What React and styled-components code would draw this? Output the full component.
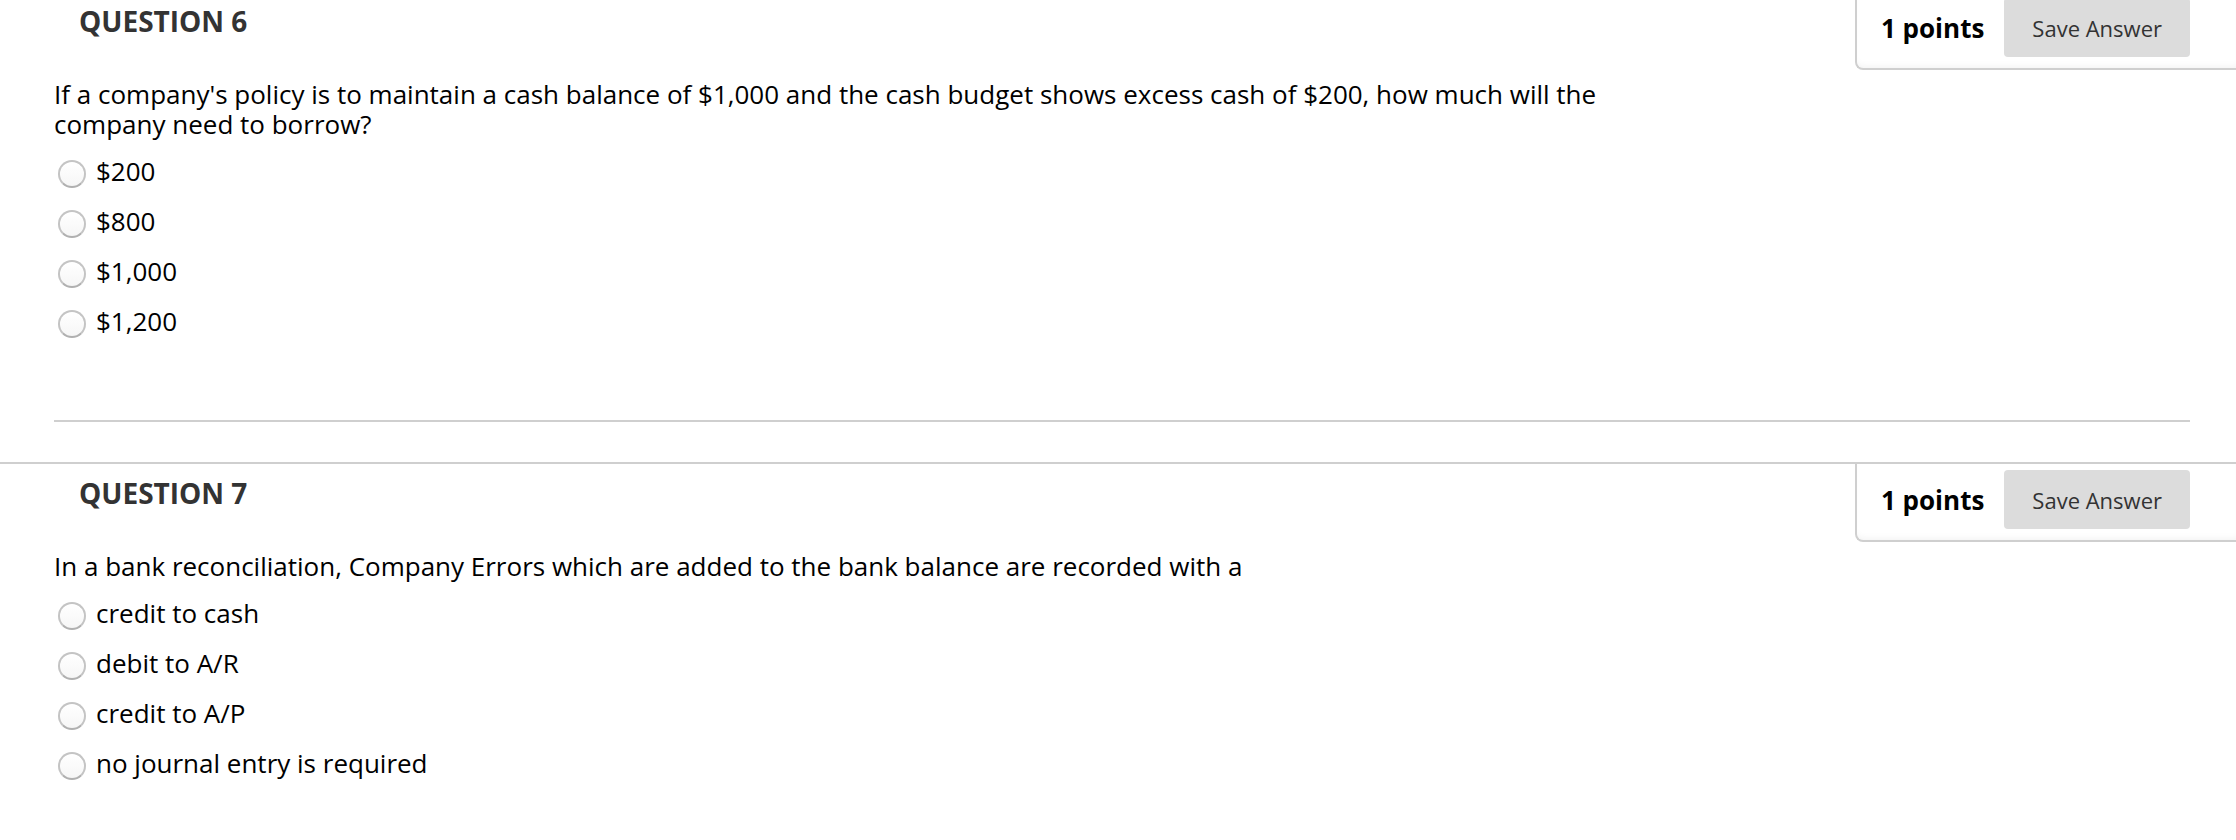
import React from "react";
import styled, { createGlobalStyle } from "styled-components";

const GlobalStyle = createGlobalStyle`
  html, body {
    margin: 0;
    padding: 0;
    background: #ffffff;
    overflow: hidden;
  }
  body {
    font-family: "Open Sans", "Noto Sans", "Liberation Sans", sans-serif;
    color: #000;
  }
`;

const Page = styled.div`
  width: 2236px;
  margin-top: -10px;
`;

const QuestionBlock = styled.section`
  border-top: 2px solid #cfcfcf;
  margin-bottom: 40px;
`;

const Header = styled.div`
  display: flex;
  justify-content: space-between;
  align-items: flex-start;
`;

const Title = styled.h2`
  margin: 0;
  padding: 9px 0 0 79px;
  font-size: 28px;
  line-height: 40px;
  font-weight: 700;
  color: #333333;
`;

const MetaBox = styled.div`
  display: flex;
  align-items: center;
  gap: 20px;
  padding: 6px 46px 11px 24px;
  border-left: 2px solid #cfcfcf;
  border-bottom: 2px solid #cfcfcf;
  border-bottom-left-radius: 8px;
  box-shadow: inset 0 -6px 8px -6px rgba(0, 0, 0, 0.07);
`;

const Points = styled.span`
  font-size: 26px;
  font-weight: 700;
  color: #000;
  white-space: nowrap;
`;

const SaveButton = styled.button`
  height: 59px;
  padding: 0 28px;
  border: none;
  border-radius: 4px;
  background: #dcdcdc;
  color: #333333;
  font-family: inherit;
  font-size: 22px;
  cursor: pointer;
`;

const Content = styled.div`
  padding: 0 46px 0 54px;
`;

const Prompt = styled.p`
  margin: 9px 0 0 0;
  max-width: 1620px;
  font-size: 26px;
  line-height: 30px;
  color: #000;
`;

const Options = styled.ul`
  list-style: none;
  margin: 7px 0 0 0;
  padding: 0;
`;

const OptionRow = styled.li`
  display: flex;
  align-items: center;
  height: 50px;
  gap: 10px;
  font-size: 26px;
  color: #000;
`;

const Radio = styled.span`
  box-sizing: border-box;
  width: 28px;
  height: 28px;
  margin: 6px 0 0 4px;
  border-radius: 50%;
  border: 2px solid #c4c4c4;
  border-bottom-color: #b0b0b0;
  background: linear-gradient(#ffffff, #f6f6f6);
  box-shadow: inset 0 1px 1px rgba(255, 255, 255, 0.9);
  flex: none;
`;

const Divider = styled.hr`
  margin: 74px 0 0 0;
  border: none;
  border-top: 2px solid #cfcfcf;
  height: 0;
`;

const questions = [
  {
    number: 6,
    prompt:
      "If a company's policy is to maintain a cash balance of $1,000 and the cash budget shows excess cash of $200, how much will the company need to borrow?",
    options: ["$200", "$800", "$1,000", "$1,200"],
  },
  {
    number: 7,
    prompt:
      "In a bank reconciliation, Company Errors which are added to the bank balance are recorded with a",
    options: [
      "credit to cash",
      "debit to A/R",
      "credit to A/P",
      "no journal entry is required",
    ],
  },
];

function Question({ q }) {
  return (
    <QuestionBlock>
      <Header>
        <Title>QUESTION {q.number}</Title>
        <MetaBox>
          <Points>1 points</Points>
          <SaveButton type="button">Save Answer</SaveButton>
        </MetaBox>
      </Header>
      <Content>
        <Prompt>{q.prompt}</Prompt>
        <Options>
          {q.options.map((o) => (
            <OptionRow key={o}>
              <Radio />
              <span>{o}</span>
            </OptionRow>
          ))}
        </Options>
        <Divider />
      </Content>
    </QuestionBlock>
  );
}

export default function App() {
  return (
    <>
      <GlobalStyle />
      <Page>
        {questions.map((q) => (
          <Question key={q.number} q={q} />
        ))}
      </Page>
    </>
  );
}
